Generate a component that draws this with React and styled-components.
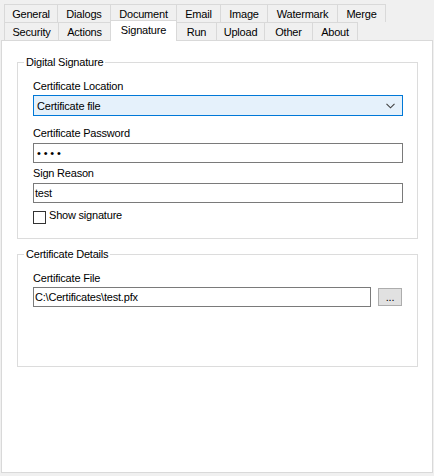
import React from 'react';
import styled, { createGlobalStyle } from 'styled-components';

const GlobalStyle = createGlobalStyle`
  html, body {
    margin: 0;
    padding: 0;
    background: #f0f0f0;
  }
  body {
    font-family: "Liberation Sans", Arial, sans-serif;
    font-size: 11px;
    letter-spacing: -0.2px;
    color: #000;
  }
  * {
    box-sizing: border-box;
  }
`;

const topTabs = [
  ['General', 54],
  ['Dialogs', 54],
  ['Document', 67],
  ['Email', 45],
  ['Image', 48],
  ['Watermark', 71],
  ['Merge', 49],
];

const bottomTabs = [
  ['Security', 55],
  ['Actions', 53],
  ['Signature', 67],
  ['Run', 41],
  ['Upload', 49],
  ['Other', 49],
  ['About', 46],
];

function App() {
  return (
    <Window>
      <GlobalStyle />
      <TabStrip>
        <TabRow>
          {topTabs.map(([name, w]) => (
            <Tab key={name} $width={w}>{name}</Tab>
          ))}
        </TabRow>
        <TabRow>
          {bottomTabs.map(([name, w]) => (
            <Tab key={name} $width={w} $active={name === 'Signature'}>{name}</Tab>
          ))}
        </TabRow>
      </TabStrip>
      <Panel>
        <GroupBox $pb={14}>
          <Legend>Digital Signature</Legend>
          <Label>Certificate Location</Label>
          <ComboBox>
            <span>Certificate file</span>
            <svg width="9" height="6" viewBox="0 0 9 6">
              <path d="M0.5 0.8 L4.5 4.8 L8.5 0.8" fill="none" stroke="#404040" strokeWidth="1.1" />
            </svg>
          </ComboBox>
          <Label $top={10} $gap={3}>Certificate Password</Label>
          <TextBox $dots>••••</TextBox>
          <Label $top={3} $gap={3}>Sign Reason</Label>
          <TextBox>test</TextBox>
          <CheckRow>
            <CheckBox />
            <span>Show signature</span>
          </CheckRow>
        </GroupBox>
        <GroupBox $pb={59} $mt={8}>
          <Legend>Certificate Details</Legend>
          <Label>Certificate File</Label>
          <FileRow>
            <TextBox $width={338}>C:\Certificates\test.pfx</TextBox>
            <BrowseButton>...</BrowseButton>
          </FileRow>
        </GroupBox>
      </Panel>
    </Window>
  );
}

const Window = styled.div`
  width: 434px;
  height: 476px;
  padding: 4px 0 0 1px;
`;

const TabStrip = styled.div`
  padding-left: 3px;
  display: flex;
  flex-direction: column;
`;

const TabRow = styled.div`
  display: flex;
  align-items: flex-start;
  height: 18px;
`;

const Tab = styled.div`
  width: ${p => p.$width}px;
  height: ${p => (p.$active ? 21 : 18)}px;
  margin: ${p => (p.$active ? '-2px -1px -1px 0' : '0 -1px 0 0')};
  padding-bottom: ${p => (p.$active ? 3 : 0)}px;
  border: 1px solid #d9d9d9;
  border-bottom: none;
  background: ${p => (p.$active ? '#fff' : '#f0f0f0')};
  position: ${p => (p.$active ? 'relative' : 'static')};
  z-index: ${p => (p.$active ? 1 : 'auto')};
  display: flex;
  align-items: center;
  justify-content: center;
  white-space: nowrap;
  line-height: 14px;
`;

const Panel = styled.div`
  width: 432px;
  height: 433px;
  background: #fff;
  border: 1px solid #d9d9d9;
  padding-top: 14px;
  display: flex;
  flex-direction: column;
`;

const GroupBox = styled.fieldset`
  margin: ${p => p.$mt || 0}px 14px 0 15px;
  padding: 9px 14px ${p => p.$pb}px 15px;
  border: 1px solid #dcdcdc;
  min-width: 0;
  display: flex;
  flex-direction: column;
`;

const Legend = styled.legend`
  margin-left: -9px;
  padding: 0 2px;
  line-height: 15px;
`;

const Label = styled.div`
  line-height: 14px;
  height: 14px;
  margin-top: ${p => p.$top || 0}px;
  margin-bottom: ${p => p.$gap || 2}px;
`;

const ComboBox = styled.div`
  height: 21px;
  border: 1px solid #0078d7;
  background: #e5f1fb;
  padding: 0 7px 0 3px;
  display: flex;
  align-items: center;
  justify-content: space-between;
`;

const TextBox = styled.div`
  width: ${p => (p.$width ? `${p.$width}px` : 'auto')};
  height: 20px;
  border: 1px solid #7a7a7a;
  background: #fff;
  padding-left: ${p => (p.$dots ? 3 : 1)}px;
  letter-spacing: ${p => (p.$dots ? '2.8px' : '-0.2px')};
  display: flex;
  align-items: center;
  white-space: nowrap;
`;

const CheckRow = styled.div`
  margin-top: 5px;
  display: flex;
  align-items: flex-start;
  gap: 3px;
  line-height: 14px;
  height: 16px;
`;

const CheckBox = styled.span`
  width: 13px;
  height: 13px;
  margin-top: 3px;
  border: 1px solid #333;
  background: #fff;
  flex: none;
`;

const FileRow = styled.div`
  display: flex;
  align-items: center;
  gap: 7px;
`;

const BrowseButton = styled.div`
  width: 24px;
  height: 18px;
  border: 1px solid #adadad;
  background: #e1e1e1;
  display: flex;
  align-items: center;
  justify-content: center;
  line-height: 14px;
  padding-bottom: 1px;
`;

export default App;
